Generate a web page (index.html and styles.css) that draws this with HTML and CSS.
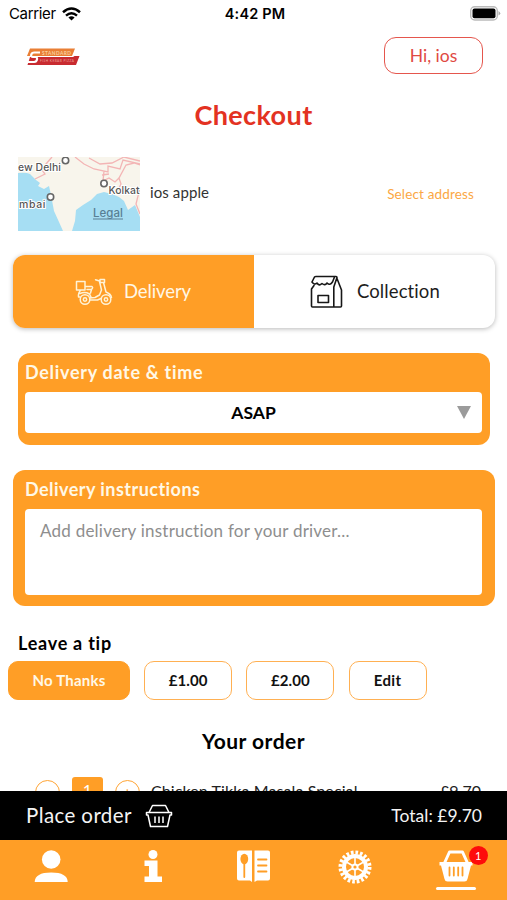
FILE: index.html
```html
<!DOCTYPE html>
<html lang="en">
<head>
<meta charset="utf-8">
<title>Checkout</title>
<link rel="stylesheet" href="styles.css">
</head>
<body>
<div class="app">
  <div class="status">
    <div class="carrier"><span>Carrier</span>
      <svg width="19" height="14" viewBox="0 0 19 14" fill="none" stroke="#000" stroke-width="2.5"><path d="M1 5.3Q9.500-2.300 18 5.300M4 8.600Q9.500 3.800 15 8.600"/><path d="M9.500 13.500L6.400 10.600Q9.500 8.100 12.600 10.600Z" fill="#000" stroke="none"/></svg>
    </div>
    <span class="clock">4:42 PM</span>
    <svg class="battery" width="31" height="15" viewBox="0 0 31 15"><rect x=".7" y=".7" width="26.600" height="13.300" rx="4" fill="#fff" stroke="#bbb" stroke-width="1.400"/><rect x="2.500" y="2.500" width="23" height="9.700" rx="2" fill="#000"/><path d="M28.500 5q3.500 2.300 0 4.600z" fill="#aaa"/></svg>
  </div>

  <header class="header">
    <svg class="logo" width="54" height="18" viewBox="0 0 54 18">
      <path d="M4 .5H49L46 8H1z" fill="#e97f35"/><path d="M4 9H47L48.500 8H53.500L50 17H1.500z" fill="#c82b30"/>
      <path d="M14 4.500H8.500Q5.700 4.500 5.200 6.700T7 9H9.500Q11.500 9.200 11 11.500T8 14H2" fill="none" stroke="#fff" stroke-width="2.200"/>
      <text x="16" y="7.100" font-size="4.800" textLength="29" fill="#f8cf9e" font-weight="700">STANDARD</text><text x="14" y="14.200" font-size="3.200" textLength="34" fill="#eda09a">FISH KEBAB PIZZA</text>
    </svg>
    <button class="hello">Hi, ios</button>
  </header>

  <h1 class="title">Checkout</h1>

  <section class="address">
    <svg class="map" width="122" height="74" viewBox="0 0 122 74">
      <rect width="122" height="74" fill="#f8f5ec"/>
      <path d="M0 16Q8 15 12 17L18 23 22 26 20 29 26 32 31 29 33 38 36 54 41 65 45 74H0zM86 35L79 37 73 43 65 48 58 53 57 64 54 74H122V60L117 48 110 53 106 44 101 40 94 37z" fill="#a6def3"/>
      <g fill="none" stroke="#f3b5b5" stroke-width="1.300"><path d="M34 0L28 7 24 13 27 17 17 22M57 0L66 7 76 12 90 15V9L102 12 105 3 122 7M71 1L82 7 94 6 106 0 122 4M86 14L85 24 91 21 97 25 101 21 108 8 116 6 122 8M101 21L103 27 98 37M122 31L118 47 122 57M84 18L91 17"/></g>
      <g fill="#fff" stroke="#666" stroke-width="1.600"><circle cx="47.500" cy="3.500" r="3.200"/><circle cx="86" cy="26.500" r="3.200"/><circle cx="32.500" cy="40" r="3.200"/></g>
      <g class="places"><text x="0" y="13.500" textLength="43">ew Delhi</text><text x="90.500" y="36.500" textLength="31">Kolkat</text><text x="1" y="50.500" textLength="26.500">mbai</text></g>
      <text class="legal" x="75" y="59.500" textLength="30">Legal</text><path d="M75 62H105" stroke="#587f94"/>
    </svg>
    <span class="name">ios apple</span>
    <a class="select">Select address</a>
  </section>

  <div class="toggle">
    <div class="option active">
      <svg width="38" height="28" viewBox="0 0 38 28" fill="none" stroke="#fff3d6" stroke-width="1.500" stroke-linejoin="round" stroke-linecap="round"><path d="M1.500 3.500H10V12H1.500zM10 8.500H17Q18.500 9.500 16.500 11.500L15.500 15M8 12H6Q3 14.500 3.500 19H5.200M14.800 20L20 19.500 24.500 17 26.500 12 24.500 3.500M12 11.500H16M24.500 3L20.500 1.800M25 1.500H29.500V4.500H25zM28.500 4.500L31 14Q36 16 36.500 19.500M26 20.500L22.500 22H15M5 15.500Q10 13.500 14.500 16L16 19"/><circle cx="10" cy="21.500" r="4.800"/><circle cx="10" cy="21.500" r="1.700"/><circle cx="31" cy="21.500" r="4.800"/><circle cx="31" cy="21.500" r="1.700"/></svg>
      <span>Delivery</span>
    </div>
    <div class="option second">
      <svg width="33" height="34" viewBox="0 0 33 34" fill="none" stroke="#171717" stroke-width="1.600" stroke-linejoin="round" stroke-linecap="round"><path d="M2 7L4.500 2Q5 1.500 6 1.500H26Q27 1.500 27 2.500L23.800 12V32M27 3.500L31.500 15V31Q31.500 32 30.500 32H2.500Q1.500 32 1.500 31V14L4 10.500M2 7Q4.500 10.500 7 8 9 11.500 12 8.500 15 11 17 8 20 11 22.500 7L24.500 2"/><path d="M8 20.500H18.500V27.500H8z"/></svg>
      <span>Collection</span>
    </div>
  </div>

  <section class="panel when">
    <h2>Delivery date &amp; time</h2>
    <div class="picker"><span>ASAP</span><i class="caret"></i></div>
  </section>

  <section class="panel notes">
    <h2>Delivery instructions</h2>
    <div class="field">Add delivery instruction for your driver...</div>
  </section>

  <h3 class="tip-title">Leave a tip</h3>
  <div class="tips">
    <button class="tip none">No Thanks</button><button class="tip">£1.00</button><button class="tip">£2.00</button><button class="tip edit">Edit</button>
  </div>

  <h2 class="order-title">Your order</h2>
  <div class="order">
    <span class="round">−</span><span class="qty">1</span><span class="round">+</span>
    <span class="item">Chicken Tikka Masala Special</span><span class="price">£9.70</span>
  </div>

  <div class="bottom">
    <div class="place">
      <span class="place-label">Place order</span>
      <svg width="28" height="24" viewBox="0 0 28 24" fill="none" stroke="#fff" stroke-width="1.500" stroke-linejoin="round"><path d="M4 8.500L7.500 1.500H20.500L24 8.500M1.500 8.500H26.500V11H25L22.500 22.500H5.500L3 11H1.500zM10 12.500V19M14 12.500V19M18 12.500V19"/></svg>
      <span class="total">Total: £9.70</span>
    </div>
    <nav class="nav">
      <a><svg width="34" height="34" viewBox="0 0 34 34"><circle cx="17.200" cy="9.500" r="9.300"/><path d="M.7 32Q1 22.500 17.200 22.500T33.700 32Z"/></svg></a>
      <a><svg width="34" height="34" viewBox="0 0 34 34"><circle cx="18" cy="4.500" r="4.500"/><path d="M9.500 10.500H22.500V26.500H27V32H9.500V26.500H14V16H9.500z"/></svg></a>
      <a><svg width="36" height="34" viewBox="0 0 36 34"><path d="M4 .5H17V32L15 30.500H4Q2 30.500 2 28.500V2.500Q2 .5 4 .5zM19.500 .5H33Q35 .5 35 2.500V28.500Q35 30.500 33 30.500H22L19.500 32z"/><ellipse class="ink" cx="9.300" cy="9" rx="3.900" ry="5.200"/><path class="line" d="M9.300 13V27M23 9.500H31.500M23 15.500H31.500M23 21.500H31.500"/></svg></a>
      <a><svg width="34" height="34" viewBox="0 0 34 34"><circle class="teeth" cx="17" cy="17" r="14.500"/><circle class="rim" cx="17" cy="17" r="11"/><circle cx="17" cy="17" r="3.600"/><path class="spoke" d="M17 7V27M8.340 12L25.660 22M8.340 22L25.660 12"/><circle class="ink" cx="17" cy="17" r="1.600"/></svg></a>
      <a class="cart"><svg width="34" height="34" viewBox="0 0 34 34"><path class="handle" d="M5.500 13L10.500 2H23.500L28.500 13"/><path d="M.5 12H33.500V15.500H32L28.500 29Q28 31.500 25.500 31.500H8.500Q6 31.500 5.500 29L2 15.500H.5z"/><path class="line" d="M10.500 17.500V25.500M14.800 17.500V25.500M19.200 17.500V25.500M23.500 17.500V25.500"/></svg><b class="badge">1</b><i class="mark"></i></a>
    </nav>
  </div>
</div>
</body>
</html>
```
FILE: styles.css
```css
* { box-sizing: border-box; }
body { margin: 0; background: #fff; color: #000; font-family: Lato, "Liberation Sans", sans-serif; font-variant-ligatures: none; }
h1, h2, h3 { margin: 0; }
button { font-family: inherit; padding: 0; background: #fff; }
svg { display: block; flex: none; }
.app { position: relative; width: 507px; height: 900px; overflow: hidden; display: flex; flex-direction: column; }
.status { height: 27px; display: grid; grid-template-columns: 1fr auto 1fr; align-items: center; padding: 0 6px 0 9px; font-family: Inter, sans-serif; font-size: 15px; }
.carrier { display: flex; gap: 6px; align-items: center; letter-spacing: -.35px; }
.clock { font-weight: 600; font-size: 14.500px; letter-spacing: .15px; }
.battery { justify-self: end; }
.header { height: 47px; padding: 10px 24px 0 26px; display: flex; justify-content: space-between; }
.logo { margin-top: 11px; }
.hello { width: 99px; height: 37px; border: 1.5px solid #e5564d; border-radius: 12px; color: #df4a43; font-size: 17.500px; padding-bottom: 1px; }
.title { margin-top: 23px; height: 36px; line-height: 36px; text-align: center; color: #e33222; font-size: 27px; letter-spacing: .4px; font-weight: 700; }
.address { display: flex; align-items: center; margin: 24px 33px 0 18px; height: 74px; }
.places { font: 500 10.5px Inter, sans-serif; fill: #565656; stroke: #fff; stroke-width: 2px; paint-order: stroke; }
.legal { font: 500 11.500px Inter, sans-serif; fill: #587f94; }
.name { margin: 0 0 4px 10px; font-size: 15px; letter-spacing: .1px; color: #333; }
.select { margin: 0 0 1px auto; font-size: 13.5px; letter-spacing: .15px; color: #fba744; }
.toggle { margin: 24px 12px 0 13px; height: 73px; border-radius: 12px; overflow: hidden; display: grid; grid-template-columns: 241px 241px; box-shadow: 0 1px 5px rgba(0,0,0,.28); }
.option { display: flex; align-items: center; padding-left: 56px; gap: 14px; font-size: 18.500px; color: #1d1d1d; }
.second { letter-spacing: .1px; }
.option span { margin-bottom: 2px; }
.active { background: #ff9e26; color: #fff7e5; padding-left: 62px; gap: 11px; letter-spacing: -.1px; }
.panel { background: #ff9e26; border-radius: 12px; }
.panel h2 { height: 39px; line-height: 38px; color: #fff8e6; font-size: 18px; font-weight: 700; letter-spacing: .7px; }
.when { margin: 25px 17px 0 18px; height: 92px; padding: 0 8px 0 7px; }
.picker { height: 41px; background: #fff; border-radius: 4px; display: flex; align-items: center; justify-content: center; font-size: 17.500px; font-weight: 700; position: relative; }
.caret { position: absolute; right: 11px; top: 14px; border: 7.500px solid transparent; border-top: 13px solid #9b9b9b; border-bottom: 0; }
.notes { margin: 25px 12px 0 13px; height: 136px; padding: 0 13px 0 12px; }
.notes h2 { letter-spacing: .46px; }
.field { height: 86px; background: #fff; border-radius: 4px; padding: 11px 15px; line-height: 21px; font-size: 17px; letter-spacing: .23px; color: #8e8e8e; }
.tip-title { margin: 26px 0 0 18px; height: 23px; line-height: 23px; font-size: 18px; letter-spacing: .75px; }
.tips { display: flex; margin: 6px 0 0 8px; gap: 14.200px; }
.tip { width: 88px; height: 39px; border: 1.5px solid #ffb052; border-radius: 10px; color: #111; font-size: 15px; letter-spacing: .1px; font-weight: 700; padding-bottom: 2px; }
.none { width: 122px; background: #ff9e26; border-color: #ff9e26; color: #fff8e6; letter-spacing: .2px; }
.edit { width: 78px; letter-spacing: .3px; }
.order-title { margin-top: 27px; height: 28px; line-height: 28px; text-align: center; font-size: 21px; letter-spacing: .5px; }
.order { height: 28px; margin: 22px 26px 0 35px; display: flex; align-items: flex-start; line-height: 26px; font-size: 16px; color: #222; }
.round { width: 25px; height: 25px; margin-top: 3px; border: 1.5px solid #ffa535; border-radius: 50%; color: #ff9e26; text-align: center; line-height: 22px; }
.qty { width: 31px; height: 31px; margin: 0 12px 0; background: #ff9e26; border-radius: 3px; color: #fff; text-align: center; line-height: 26px; }
.item { margin-left: 11px; margin-top: 1px; letter-spacing: .1px; }
.price { margin-left: auto; margin-top: 1px; }
.bottom { position: absolute; left: 0; right: 0; bottom: 0; }
.place { height: 49px; background: #000; color: #f4f4f4; display: flex; align-items: center; padding: 0 25px 0 26px; }
.place-label { font-size: 20.500px; letter-spacing: .4px; margin: 0 13px 2px 0; }
.total { margin: 0 0 1px auto; font-size: 17.500px; }
.nav { height: 60px; background: #ff9e26; display: grid; grid-template-columns: repeat(5, 101.300px); }
.nav a { position: relative; display: flex; justify-content: center; padding-top: 10px; fill: #fff; }
.nav .ink { fill: #ff9e26; }
.line { stroke: #ff9e26; stroke-width: 1.800px; stroke-linecap: round; fill: none; }
.teeth { fill: none; stroke: #fff; stroke-width: 4px; stroke-dasharray: 2.656 1.900; }
.rim { fill: none; stroke: #fff; stroke-width: 4px; }
.spoke { stroke: #fff; stroke-width: 1.600px; }
.handle { fill: none; stroke: #fff; stroke-width: 3px; stroke-linejoin: round; }
.badge { position: absolute; left: 63.500px; top: 6px; width: 19px; height: 19px; border-radius: 50%; background: #fe0b0b; color: #fff; font-size: 11px; line-height: 19px; text-align: center; font-weight: 400; }
.mark { position: absolute; left: 31px; top: 47px; width: 40px; height: 3px; border-radius: 2px; background: #fff; }
```
